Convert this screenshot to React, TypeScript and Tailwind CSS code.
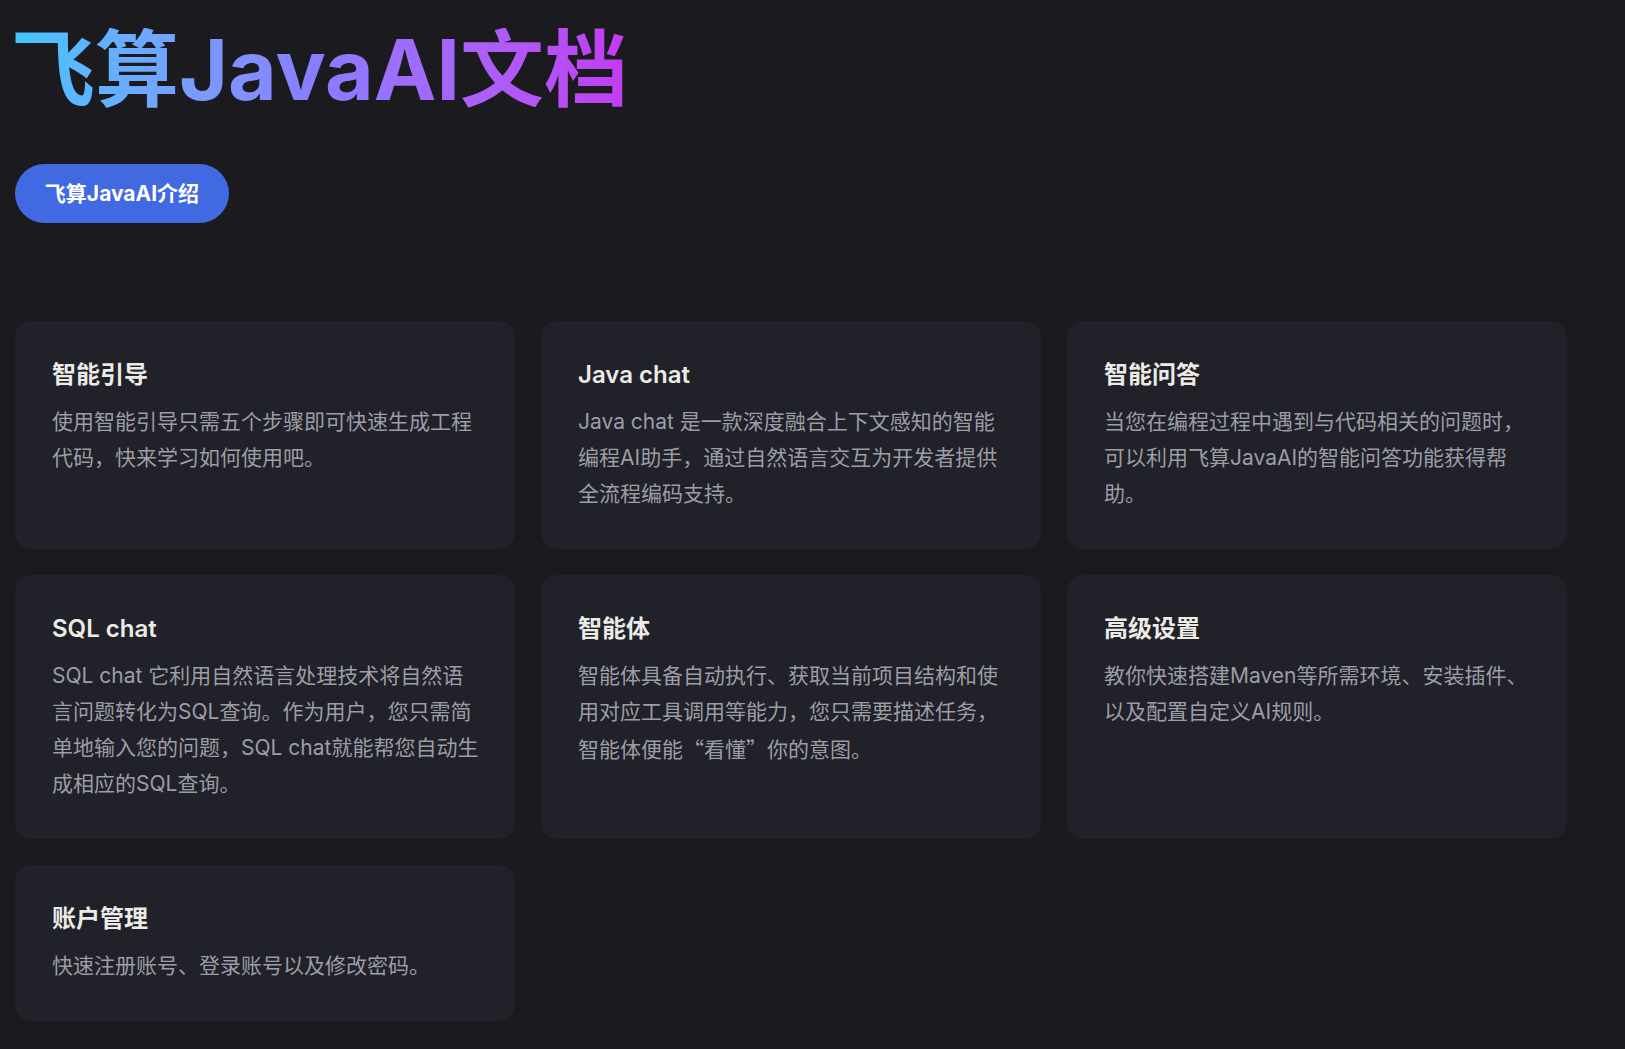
import React from "react";

type Doc = {
  title: string;
  desc: React.ReactNode;
};

// CJK quote marks must come from the CJK font, Inter's are too narrow
const Q = ({ children }: { children: React.ReactNode }) => (
  <span style={{ fontFamily: '"Noto Sans CJK SC", sans-serif' }}>{children}</span>
);

const docs: Doc[] = [
  {
    title: "智能引导",
    desc: "使用智能引导只需五个步骤即可快速生成工程代码，快来学习如何使用吧。",
  },
  {
    title: "Java chat",
    desc: "Java chat 是一款深度融合上下文感知的智能编程AI助手，通过自然语言交互为开发者提供全流程编码支持。",
  },
  {
    title: "智能问答",
    desc: "当您在编程过程中遇到与代码相关的问题时，可以利用飞算JavaAI的智能问答功能获得帮助。",
  },
  {
    title: "SQL chat",
    desc: "SQL chat 它利用自然语言处理技术将自然语言问题转化为SQL查询。作为用户，您只需简单地输入您的问题，SQL chat就能帮您自动生成相应的SQL查询。",
  },
  {
    title: "智能体",
    desc: (
      <>
        智能体具备自动执行、获取当前项目结构和使用对应工具调用等能力，您只需要描述任务，智能体便能<Q>“</Q>看懂<Q>”</Q>你的意图。
      </>
    ),
  },
  {
    title: "高级设置",
    desc: "教你快速搭建Maven等所需环境、安装插件、以及配置自定义AI规则。",
  },
  {
    title: "账户管理",
    desc: "快速注册账号、登录账号以及修改密码。",
  },
];

function DocCard({ doc }: { doc: Doc }) {
  return (
    <a
      href="#"
      className="block rounded-2xl bg-[#202129] pt-[38px] pb-[37px] pl-[37px] pr-[32px] transition-colors hover:bg-[#25262f]"
    >
      <h3 className="text-[24px] leading-[32px] font-semibold text-[#ecebe6]">
        {doc.title}
      </h3>
      <p className="mt-[13px] text-[21px] leading-[36px] text-[#9d9da5]">
        {doc.desc}
      </p>
    </a>
  );
}

export default function App() {
  return (
    <div
      className="min-h-screen bg-[#1b1b1f] pl-[15px] pt-[28px] pb-[29px]"
      style={{ fontFamily: '"Inter", "Noto Sans CJK SC", sans-serif' }}
    >
      {/* Hero */}
      <h1 className="-ml-[4px] inline-block bg-gradient-to-r from-[#3fc6ff] via-[#8a7cff] to-[#c23af3] bg-clip-text text-[84px] leading-[84px] font-bold text-transparent">
        飞算JavaAI文档
      </h1>

      <div className="mt-[52px]">
        <a
          href="#"
          className="inline-flex h-[59px] w-[214px] items-center justify-center rounded-full bg-[#4169e1] text-[21px] font-bold text-white"
        >
          飞算JavaAI介绍
        </a>
      </div>

      {/* Doc cards */}
      <div className="mt-[98px] grid w-[1552px] grid-cols-3 gap-[26px]">
        {docs.map((doc) => (
          <DocCard key={doc.title} doc={doc} />
        ))}
      </div>
    </div>
  );
}
